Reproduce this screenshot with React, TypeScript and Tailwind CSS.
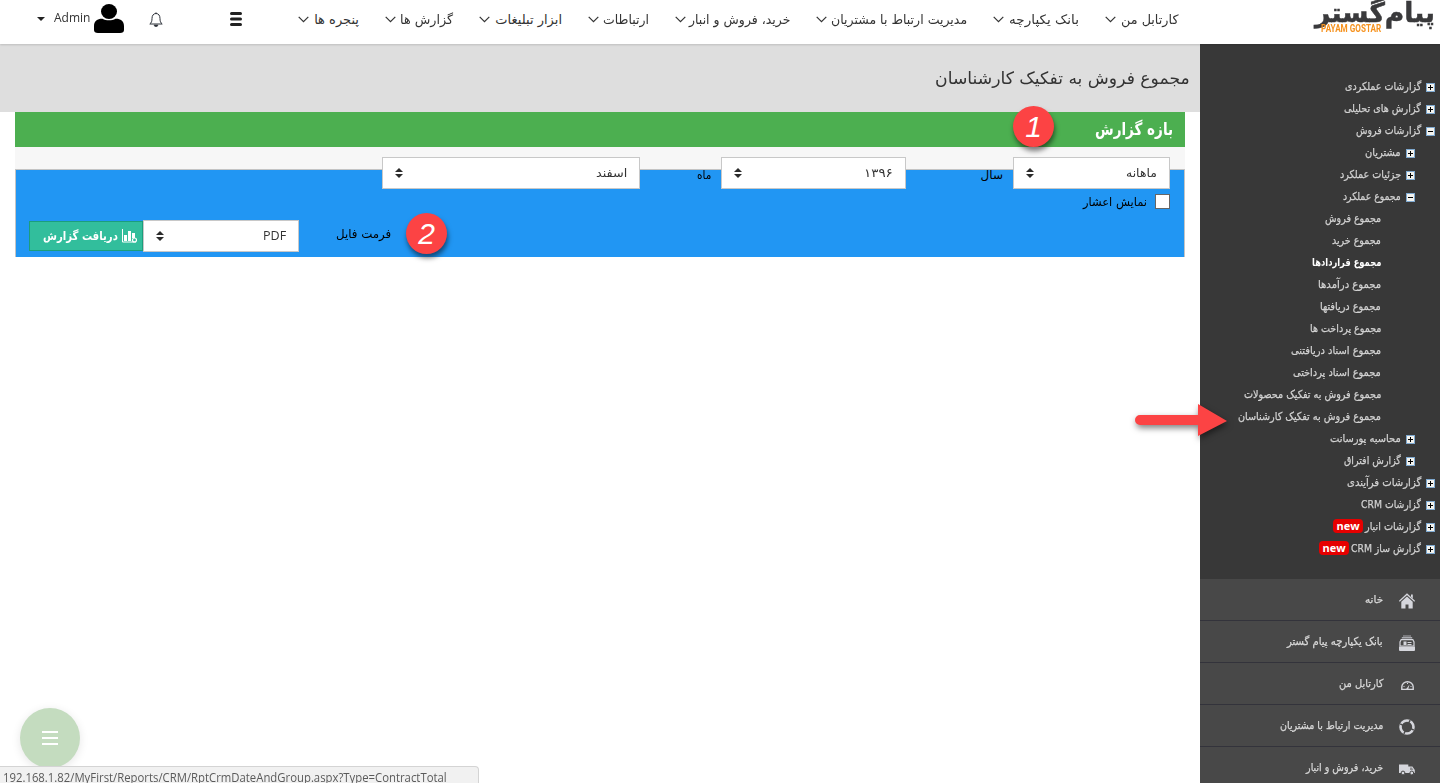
import { useLayoutEffect, useRef, type ReactNode } from "react";

const FA = "font-['DejaVu_Sans','Noto_Sans',sans-serif]";

/** Single line of text, condensed or widened to fill the given width. */
function Fit({ w, className = "", children }: { w: number; className?: string; children: ReactNode }) {
  const ref = useRef<HTMLSpanElement>(null);
  useLayoutEffect(() => {
    const el = ref.current;
    if (!el) return;
    el.style.transform = `scaleX(${w / el.offsetWidth})`;
  }, [w]);
  return (
    <span className={`flex shrink-0 whitespace-nowrap ${className}`} style={{ width: w }}>
      <span ref={ref} className="block shrink-0 origin-right">
        {children}
      </span>
    </span>
  );
}

const nav: [string, number, number][] = [
  ["کارتابل من", 57, 73],
  ["بانک یکپارچه", 70, 86],
  ["مدیریت ارتباط با مشتریان", 136, 151],
  ["خرید، فروش و انبار", 101, 115],
  ["ارتباطات", 46, 61],
  ["ابزار تبلیغات", 67, 83],
  ["گزارش ها", 53, 68],
  ["پنجره ها", 45, 61],
];

type Node = { t: string; w: number; level: 0 | 1 | 2; open?: boolean; active?: boolean; isNew?: boolean };
const tree: Node[] = [
  { t: "گزارشات عملکردی", w: 76, level: 0 },
  { t: "گزارش های تحلیلی", w: 77, level: 0 },
  { t: "گزارشات فروش", w: 65, level: 0, open: true },
  { t: "مشتریان", w: 36, level: 1 },
  { t: "جزئیات عملکرد", w: 61, level: 1 },
  { t: "مجموع عملکرد", w: 58, level: 1, open: true },
  { t: "مجموع فروش", w: 56, level: 2 },
  { t: "مجموع خرید", w: 49, level: 2 },
  { t: "مجموع قراردادها", w: 69, level: 2, active: true },
  { t: "مجموع درآمدها", w: 63, level: 2 },
  { t: "مجموع دریافتها", w: 61, level: 2 },
  { t: "مجموع پرداخت ها", w: 71, level: 2 },
  { t: "مجموع اسناد دریافتنی", w: 90, level: 2 },
  { t: "مجموع اسناد پرداختی", w: 88, level: 2 },
  { t: "مجموع فروش به تفکیک محصولات", w: 137, level: 2 },
  { t: "مجموع فروش به تفکیک کارشناسان", w: 143, level: 2 },
  { t: "محاسبه پورسانت", w: 71, level: 1 },
  { t: "گزارش افتراق", w: 57, level: 1 },
  { t: "گزارشات فرآیندی", w: 74, level: 0 },
  { t: "گزارشات CRM", w: 60, level: 0 },
  { t: "گزارشات انبار", w: 56, level: 0, isNew: true },
  { t: "گزارش ساز CRM", w: 70, level: 0, isNew: true },
];

function Toggle({ open }: { open?: boolean }) {
  return (
    <svg width="9" height="9" viewBox="0 0 9 9" className="mt-[3px] ml-[5px] shrink-0" shapeRendering="crispEdges">
      <rect width="9" height="9" fill="#7fa9d0" />
      <rect x="1" y="1" width="7" height="7" fill="#f4f3ee" />
      <path d={open ? "M2 4h5v1H2z" : "M2 4h5v1H2zM4 2h1v5H4z"} fill="#000" />
    </svg>
  );
}

function TreeRow({ n }: { n: Node }) {
  const pad = n.level === 0 ? "pr-[5px]" : n.level === 1 ? "pr-[25px]" : "pr-[59px]";
  return (
    <li className={`flex h-[22px] items-center ${pad}`}>
      {n.level < 2 && <Toggle open={n.open} />}
      <Fit
        w={n.w}
        className={`pt-[2px] text-[11px] leading-[20px] ${n.active ? "font-bold text-white" : "text-[#d2d2d2] [-webkit-text-stroke:0.25px_#d2d2d2]"}`}
      >
        {n.t}
      </Fit>
      {n.isNew && (
        <span className="mr-[2px] flex h-[14px] w-[30px] items-center justify-center rounded-[4px] bg-[#e60000] font-['Open_Sans',sans-serif] text-[11px] font-bold leading-[14px] text-white">
          new
        </span>
      )}
    </li>
  );
}

const C = "#d5d6dc";
const icons: Record<string, ReactNode> = {
  home: (
    <svg width="16" height="16" viewBox="0 0 16 16">
      <path d="M.3 8.400 8 1.200l7.700 7.200" fill="none" stroke={C} strokeWidth="1.3" />
      <path d="M12 1.500h1.800v4L12 3.800z" fill={C} />
      <path d="M2.300 8.800 8 3.500l5.700 5.300V15.500H9.500v-4h-3v4H2.300z" fill={C} />
    </svg>
  ),
  bank: (
    <svg width="16" height="16" viewBox="0 0 16 16">
      <path d="M4 .5h8v1H4zM2.800 2h10.400v1.500H2.800z" fill="#a9aaaf" />
      <path d="M2.200 4.600h11.600L15 7v4H1V7z" fill="none" stroke={C} strokeWidth="1.200" />
      <path d="M4.500 6.500h3V10h-3zM8.500 7h4v1h-4zM8.500 9h4v1h-4z" fill={C} />
      <path d="M0 11.500h16V15q0 1-1 1H1q-1 0-1-1z" fill={C} />
    </svg>
  ),
  gauge: (
    <svg width="16" height="16" viewBox="0 0 16 16">
      <path d="M2.800 12.400V10a5.700 5.200 0 0 1 11.400 0v2.400z" fill="none" stroke={C} strokeWidth="1.400" />
      <path d="M7.200 12 10.500 7.500 9.300 12z" fill={C} />
      <path d="M4.500 9.500h1M8.500 6v1M11.500 9.500h1" stroke={C} />
    </svg>
  ),
  ring: (
    <svg width="16" height="16" viewBox="0 0 16 16">
      <circle cx="8" cy="8" r="6.500" fill="none" stroke={C} strokeWidth="2.600" />
      <path d="M1.200 4.800 5 6.800M11.200 1.200 9.200 5M14.800 11.200 11 9.200M4.800 14.800 6.800 11" stroke="#484848" strokeWidth="1.400" />
    </svg>
  ),
  truck: (
    <svg width="16" height="16" viewBox="0 0 16 16">
      <path d="M0 3.500h9.300V12H0zM9.300 5.500h4.100L15.800 9v3H9.300z" fill={C} />
      <path d="M11 6.500h2L14.300 9H11z" fill="#8d8d90" />
      <circle cx="4" cy="12" r="1.900" fill={C} stroke="#484848" />
      <circle cx="12.800" cy="12" r="1.900" fill={C} stroke="#484848" />
    </svg>
  ),
};

const menu: [string, number, string][] = [
  ["خانه", 18, "home"],
  ["بانک یکپارچه پیام گستر", 96, "bank"],
  ["کارتابل من", 44, "gauge"],
  ["مدیریت ارتباط با مشتریان", 103, "ring"],
  ["خرید، فروش و انبار", 77, "truck"],
];

function Select({ label, w, className }: { label: string; w: number; className: string }) {
  return (
    <div className={`flex h-8 shrink-0 items-center justify-between border border-[#c8c8c8] bg-white pr-3 pl-3 text-xs text-[#333] ${className}`}>
      <Fit w={w}>{label}</Fit>
      <svg width="8" height="10" viewBox="0 0 8 10">
        <path d="M0 4 4 0l4 4zM0 6h8l-4 4z" fill="#2b2b2b" />
      </svg>
    </div>
  );
}

function Badge({ n, className }: { n: string; className: string }) {
  return (
    <div
      className={`absolute flex size-[41px] items-center justify-center rounded-full bg-[#fc4344] font-['Liberation_Sans',sans-serif] text-[30px] italic text-white shadow-[1px_4px_5px_rgba(0,0,0,0.5)] ${className}`}
    >
      {n}
    </div>
  );
}

export default function App() {
  return (
    <div dir="rtl" className={`relative flex h-[783px] w-[1440px] flex-col overflow-hidden bg-white ${FA}`}>
      <header className="z-10 flex h-11 shrink-0 bg-white shadow-[0_1px_2px_rgba(0,0,0,0.15)]">
        <div className="flex w-[262px] shrink-0 flex-col pr-[5px]">
          <Fit w={120} className="h-[24px] text-[27px] font-bold leading-[25px] text-[#3a3a3c] [-webkit-text-stroke:0.5px_#3a3a3c]">پیام‌گستر</Fit>
          <Fit w={60} className="mr-[54px] font-['Roboto',sans-serif] text-[11px] font-bold leading-[10px] text-[#f6921e]">PAYAM GOSTAR</Fit>
        </div>
        <nav className="flex h-[38px] items-center gap-[26px]">
          {nav.map(([t, w, total]) => (
            <div key={t} className="flex shrink-0 items-center justify-between text-[13px] text-[#333]" style={{ width: total }}>
              <Fit w={w} className="pt-px">{t}</Fit>
              <svg width="11" height="7" viewBox="0 0 11 7">
                <path d="m.7.9 4.800 4.800L10.300.9" fill="none" stroke="#333" strokeWidth="1.200" />
              </svg>
            </div>
          ))}
        </nav>
        <div className="mr-auto flex h-[37px] items-center pl-[37px]">
          <svg width="12" height="14" viewBox="0 0 12 14">
            <path d="M1.500 1.500h9M1.500 7h9M1.500 12.500h9" stroke="#222" strokeWidth="3" strokeLinecap="round" />
          </svg>
          <svg width="14" height="15" viewBox="0 0 14 15" className="mr-[67px] mt-[2px]">
            <path d="M.8 12h12.400c-1.700-1.200-2.200-3-2.200-5.500C11 3.500 9.500 1.500 7 1.500S3 3.500 3 6.500C3 9 2.500 10.800.8 12z" fill="none" stroke="#2b3038" strokeLinejoin="round" />
            <path d="M7 0v2M5 13h4q-.5 1.800-2 1.800T5 13z" stroke="#2b3038" fill="#2b3038" strokeWidth=".6" />
          </svg>
          <svg width="30" height="29" viewBox="0 0 30 29" className="mr-[25px]">
            <ellipse cx="15" cy="7.500" rx="8" ry="7.500" />
            <path d="M0 26v-4c0-5 4-7.500 8.500-7.200 3.500 2 9.500 2 13 0C26 14.500 30 17 30 22v4q0 3-4 3H4q-4 0-4-3z" />
          </svg>
          <Fit w={36} className="mr-[4px] pb-[2px] font-['Open_Sans',sans-serif] text-[13px] text-[#333]">Admin</Fit>
          <svg width="8" height="4" viewBox="0 0 8 4" className="mr-[9px]">
            <path d="M0 0h8L4 4z" fill="#222" />
          </svg>
        </div>
      </header>

      <div className="flex min-h-0 flex-1">
        <aside className="w-60 shrink-0 bg-[#383838]">
          <ul className="pt-[31px] pb-5">
            {tree.map((n) => (
              <TreeRow key={n.t} n={n} />
            ))}
          </ul>
          <ul className="bg-[#484848]">
            {menu.map(([t, w, icon]) => (
              <li
                key={t}
                className="flex h-[42px] items-center gap-4 border-b border-[#33333b] pr-[25px] text-[11px] text-[#d8d8d8] [-webkit-text-stroke:0.25px_#d8d8d8]"
              >
                <span className="mt-[3px] shrink-0">{icons[icon]}</span>
                <Fit w={w} className="pt-[2px]">{t}</Fit>
              </li>
            ))}
          </ul>
        </aside>

        <main className="min-w-0 flex-1">
          <div className="flex h-[68px] items-center bg-[#dedede] pr-[10px]">
            <Fit w={255} className="pt-[2px] text-[17px] text-[#333]">مجموع فروش به تفکیک کارشناسان</Fit>
          </div>
          <section className="mx-[15px] bg-[#f7f7f7]">
            <h2 className="flex h-[35px] items-center bg-[#4caf50] pr-3">
              <Fit w={78} className="text-[17px] font-bold text-white">بازه گزارش</Fit>
            </h2>
            <div className="mt-[22px] h-[88px] border-x border-t border-[#c4c4c4] bg-[#2196f3] px-[14px] text-xs text-black">
              <div className="-mt-[13px] flex items-center">
                <Select label="ماهانه" w={31} className="w-[157px]" />
                <Fit w={22} className="mr-[10px] pt-1">سال</Fit>
                <Select label="۱۳۹۶" w={29} className="mr-[75px] w-[185px]" />
                <Fit w={14} className="mr-[10px] pt-1">ماه</Fit>
                <Select label="اسفند" w={31} className="mr-[57px] w-[258px]" />
              </div>
              <div className="mt-[5px] flex h-[15px] items-center">
                <span className="size-[15px] border border-[#666] bg-white" />
                <Fit w={64} className="mr-2 pt-px">نمایش اعشار</Fit>
              </div>
              <div className="-ml-px mt-[11px] flex items-center justify-end">
                <Fit w={55} className="ml-[37px] pb-1">فرمت فایل</Fit>
                <Select label="PDF" w={23} className="w-[156px] font-['Open_Sans',sans-serif]" />
                <button className="flex h-[30px] w-[114px] items-center gap-1 border border-[#1b9e7c] bg-[#32be9c] pr-[5px] font-bold text-white">
                  <svg width="15" height="14" viewBox="0 0 15 14">
                    <path d="M.5 0v13H14" fill="none" stroke="#fff" />
                    <path d="M2 6h3v6H2zM6 2h3v10H6zM10 4h3v5h-3z" fill="#fff" />
                    <circle cx="12.500" cy="11" r="2" fill="none" stroke="#fff" strokeWidth="1.200" />
                  </svg>
                  <Fit w={75}>دریافت گزارش</Fit>
                </button>
              </div>
            </div>
          </section>
        </main>
      </div>

      <Badge n="1" className="left-[1013px] top-[106px] z-20" />
      <Badge n="2" className="left-[406px] top-[213px] z-20" />
      <svg width="96" height="42" viewBox="0 0 96 42" className="absolute left-[1134px] top-[402px] z-20 drop-shadow-[1px_3px_3px_rgba(0,0,0,0.5)]">
        <path d="M6 13h58V2l29 17-29 15V23H6a5 5 0 0 1 0-10z" fill="#fc4344" />
      </svg>
      <div className="absolute left-5 top-[708px] flex size-[60px] items-center justify-center rounded-full bg-[#c4dcbf] shadow-[0_2px_10px_rgba(0,0,0,0.1)]">
        <svg width="16" height="14" viewBox="0 0 16 14">
          <path d="M0 1h16M0 7h16M0 13h16" stroke="#fff" strokeWidth="2" />
        </svg>
      </div>
      <div className="absolute left-0 top-[766px] z-20 flex h-[17px] w-[479px] justify-end rounded-tr-[4px] border-t border-r border-[#d4d4d4] bg-[#f1f1f1] pl-[3px] font-['Open_Sans',sans-serif] text-[12px] leading-[21px] text-[#5a5a5a]">
        <Fit w={444}>
          <bdi dir="ltr">192.168.1.82/MyFirst/Reports/CRM/RptCrmDateAndGroup.aspx?Type=ContractTotal</bdi>
        </Fit>
      </div>
    </div>
  );
}
